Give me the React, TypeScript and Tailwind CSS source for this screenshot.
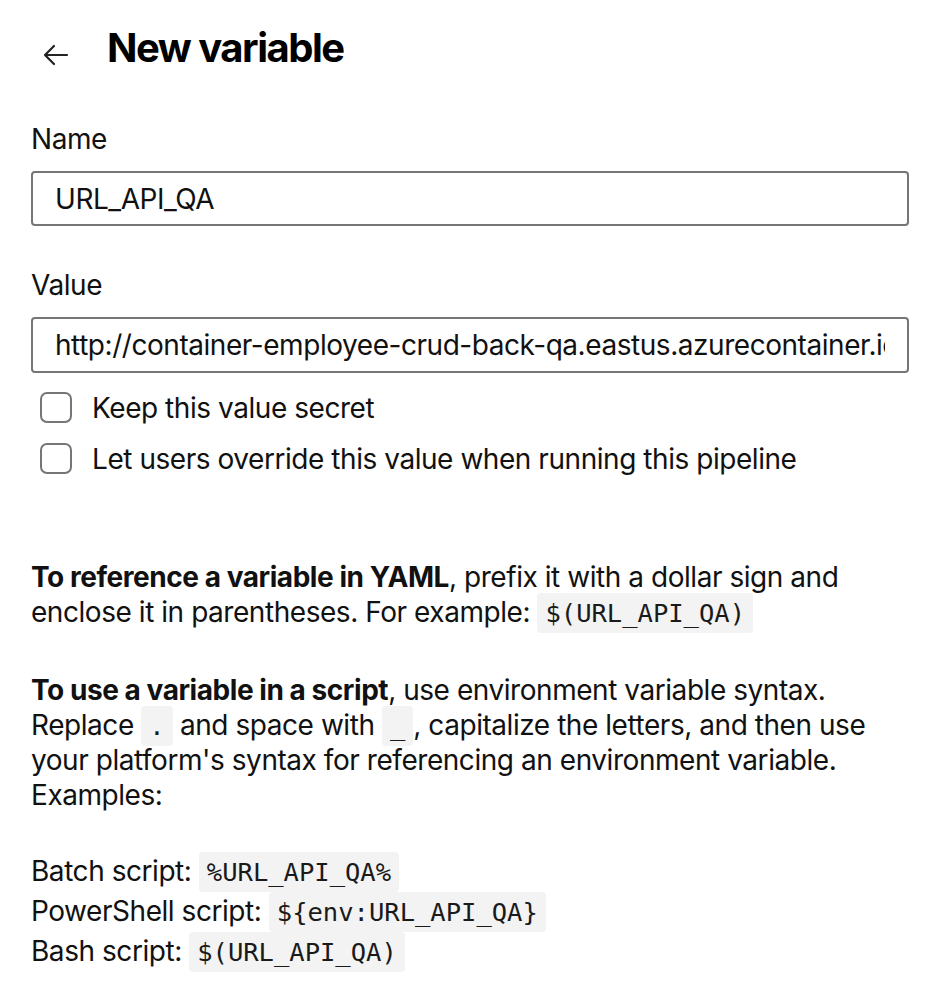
import { useState } from 'react'

function Code({ children }: { children: React.ReactNode }) {
  return (
    <code className="rounded-[4px] bg-[#f3f3f3] px-[8px] py-[5px] font-['DejaVu_Sans_Mono',monospace] text-[25.5px] leading-none tracking-normal text-[#1a1a1a]">
      {children}
    </code>
  )
}

function Check({ label }: { label: string }) {
  const [on, setOn] = useState(false)
  return (
    <label className="flex h-[51px] cursor-pointer items-center gap-[20px] pl-[9px]">
      <span
        onClick={() => setOn(!on)}
        className="block h-[31px] w-[32px] rounded-[7px] border-2 border-[#767676] bg-white"
      />
      <span>{label}</span>
    </label>
  )
}

export default function App() {
  const [name, setName] = useState('URL_API_QA')
  const [value, setValue] = useState('http://container-employee-crud-back-qa.eastus.azurecontainer.io')

  return (
    <div className="min-h-screen bg-white pl-[31px] pr-[35px] font-['Inter',sans-serif] text-[28px] tracking-[-0.45px] text-[#111]">
      <div className="flex h-[98px] items-center pb-[2px]">
        <button className="ml-[10px] mt-[14px] flex h-[30px] w-[30px] items-center justify-center text-[#222]">
          <svg width="26" height="22" viewBox="0 0 26 22" fill="none" stroke="currentColor" strokeWidth="2.2" strokeLinecap="round" strokeLinejoin="round">
            <path d="M24 11H2M11 2L2 11l9 9" />
          </svg>
        </button>
        <h1 className="ml-[36px] text-[40px] font-bold tracking-[-1.5px] text-black">New variable</h1>
      </div>

      <div className="pt-[25px]">
        <div className="mb-[16px] leading-[32px]">Name</div>
        <input
          value={name}
          onChange={(e) => setName(e.target.value)}
          className="h-[55px] w-full rounded-[4px] border-2 border-[#767676] px-[22px] tracking-[-0.45px] outline-none"
        />
      </div>

      <div className="pt-[43px]">
        <div className="mb-[16px] leading-[32px]">Value</div>
        <input
          value={value}
          onChange={(e) => setValue(e.target.value)}
          className="h-[56px] w-full rounded-[4px] border-2 border-[#767676] px-[22px] tracking-[-0.45px] outline-none"
        />
      </div>

      <div className="mt-[9px]">
        <Check label="Keep this value secret" />
        <Check label="Let users override this value when running this pipeline" />
      </div>

      <div className="mt-[76px] leading-[35px]">
        <p>
          <b className="font-bold">To reference a variable in YAML</b>, prefix it with a dollar sign and enclose it in
          parentheses. For example: <Code>$(URL_API_QA)</Code>
        </p>
        <p className="mt-[43px]">
          <b className="font-bold">To use a variable in a script</b>, use environment variable syntax. Replace{' '}
          <Code>.</Code> and space with <Code>_</Code>, capitalize the letters, and then use your platform's syntax for
          referencing an environment variable.
          <br />
          Examples:
        </p>
        <div className="mt-[38px] leading-[40px]">
          <div>
            Batch script: <Code>%URL_API_QA%</Code>
          </div>
          <div>
            PowerShell script: <Code>{'${env:URL_API_QA}'}</Code>
          </div>
          <div>
            Bash script: <Code>$(URL_API_QA)</Code>
          </div>
        </div>
      </div>
    </div>
  )
}
